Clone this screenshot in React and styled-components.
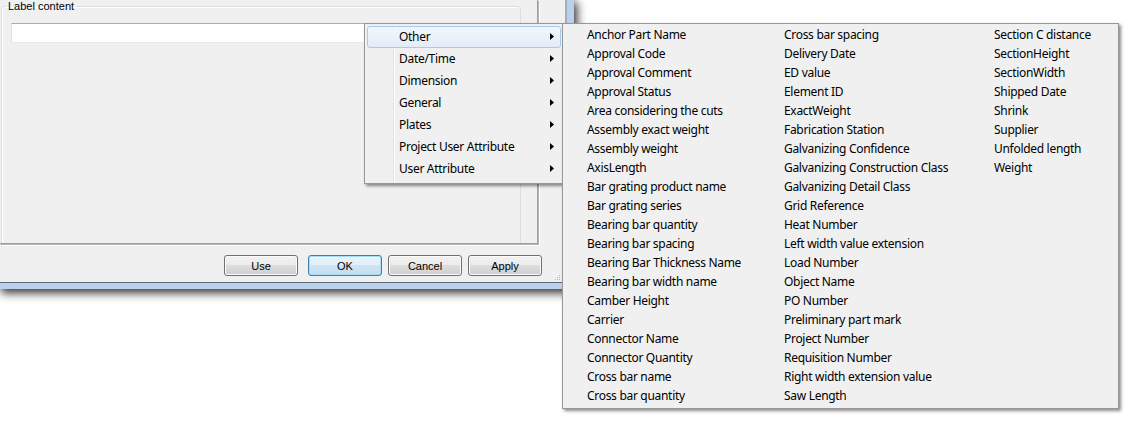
import React from 'react';
import styled, { createGlobalStyle } from 'styled-components';

const GlobalStyle = createGlobalStyle`
  html, body {
    margin: 0;
    padding: 0;
    background: #ffffff;
  }
`;

const Screen = styled.div`
  position: relative;
  width: 1129px;
  height: 434px;
  overflow: hidden;
  background: #ffffff;
`;

const Dialog = styled.div`
  box-sizing: border-box;
  width: 574px;
  height: 289px;
  border-right: 7px solid #b9d1ea;
  border-bottom: 6px solid #b9d1ea;
  box-shadow: 2px 3px 9px 1px rgba(0, 0, 0, 0.8);
  background: #b9d1ea;
`;

const Client = styled.div`
  position: relative;
  box-sizing: border-box;
  width: 567px;
  height: 283px;
  display: flex;
  flex-direction: column;
  background: #f0f0f0;
  border-right: 2px solid #a3afbc;
  border-bottom: 1px solid #5d6b7a;
`;

const Panel = styled.div`
  box-sizing: border-box;
  width: 538px;
  height: 244px;
  overflow: hidden;
  border-right: 1px solid #a0a0a0;
  border-bottom: 1px solid #a0a0a0;
  box-shadow: 1px 1px 0 #b4b4b4, 2px 2px 0 #ffffff;
  background: #f0f0f0;
`;

const GroupBox = styled.fieldset`
  box-sizing: border-box;
  margin: 0 0 0 1px;
  padding: 0;
  width: 520px;
  height: 260px;
  border: 1px solid #d5dfe5;
  border-radius: 3px;
  box-shadow: inset 1px 1px 0 #ffffff;
`;

const Legend = styled.legend`
  margin-left: 4px;
  padding: 0 2px;
  font-family: "Liberation Sans", Arial, sans-serif;
  font-size: 11px;
  line-height: 13px;
  color: #000;
`;

const TextField = styled.input`
  box-sizing: border-box;
  display: block;
  margin: 10px 0 0 9px;
  width: 354px;
  height: 20px;
  border: 1px solid;
  border-color: #abadb3 #e2e3ea #e3e9ef #dbdfe6;
  background: #ffffff;
  outline: none;
`;

const ButtonRow = styled.div`
  display: flex;
  justify-content: flex-end;
  gap: 6px;
  padding: 11px 23px 0 0;
`;

const Button = styled.button`
  box-sizing: border-box;
  width: 74px;
  height: 21px;
  margin-right: ${(p) => p.$extra || 0}px;
  padding: 0;
  font-family: "Liberation Sans", Arial, sans-serif;
  font-size: 11px;
  color: #000;
  border-radius: 3px;
  border: 1px solid ${(p) => (p.$default ? '#3c7fb1' : '#707070')};
  background: ${(p) =>
    p.$default
      ? 'linear-gradient(#eaf4fb 0%, #e1eef8 50%, #cfe4f3 50%, #c2dcee 100%)'
      : 'linear-gradient(#f2f2f2 0%, #ebebeb 50%, #dddddd 50%, #cfcfcf 100%)'};
  box-shadow: inset 0 0 0 1px ${(p) => (p.$default ? '#a9dcf6' : '#fcfcfc')};
`;

const Grip = styled.svg`
  position: absolute;
  right: 4px;
  bottom: 1px;
`;

const Menu = styled.div`
  position: absolute;
  left: 364px;
  top: 23px;
  box-sizing: border-box;
  width: 200px;
  height: 161px;
  padding: 2px;
  border: 1px solid #979797;
  background: linear-gradient(
    to right,
    #f0f0f0 28px,
    #e2e3e3 28px,
    #e2e3e3 29px,
    #ffffff 29px,
    #ffffff 30px,
    #f0f0f0 30px
  );
  box-shadow: 2px 2px 3px rgba(0, 0, 0, 0.45);
  font-family: "Noto Sans", "Open Sans", sans-serif;
  font-size: 12px;
  letter-spacing: -0.3px;
  color: #000;
`;

const MenuItem = styled.div`
  box-sizing: border-box;
  height: 22px;
  display: flex;
  align-items: center;
  justify-content: space-between;
  padding: 0 6px 1px 31px;
  border: 1px solid ${(p) => (p.$active ? '#a8caf0' : 'transparent')};
  border-radius: 3px;
  background: ${(p) =>
    p.$active ? 'linear-gradient(#f1f6fc, #e3ecf8)' : 'transparent'};
`;

const SubMenu = styled.div`
  position: absolute;
  left: 562px;
  top: 23px;
  box-sizing: border-box;
  width: 557px;
  height: 386px;
  padding: 1px 0 0 0;
  border: 1px solid #979797;
  background: #f0f0f0;
  box-shadow: 2px 2px 3px rgba(0, 0, 0, 0.45);
  display: grid;
  grid-template-columns: 197px 210px 1fr;
  grid-template-rows: repeat(20, 19px);
  grid-auto-flow: column;
  align-content: start;
  font-family: "Noto Sans", "Open Sans", sans-serif;
  font-size: 12px;
  letter-spacing: -0.3px;
  color: #000;
`;

const SubItem = styled.div`
  display: flex;
  align-items: center;
  padding-left: 24px;
  white-space: nowrap;
`;

const Arrow = () => (
  <svg width="4" height="7" viewBox="0 0 4 7">
    <polygon points="0,0 4,3.5 0,7" fill="#000" />
  </svg>
);

const categories = [
  'Other',
  'Date/Time',
  'Dimension',
  'General',
  'Plates',
  'Project User Attribute',
  'User Attribute',
];

const attributes = [
  'Anchor Part Name',
  'Approval Code',
  'Approval Comment',
  'Approval Status',
  'Area considering the cuts',
  'Assembly exact weight',
  'Assembly weight',
  'AxisLength',
  'Bar grating product name',
  'Bar grating series',
  'Bearing bar quantity',
  'Bearing bar spacing',
  'Bearing Bar Thickness Name',
  'Bearing bar width name',
  'Camber Height',
  'Carrier',
  'Connector Name',
  'Connector Quantity',
  'Cross bar name',
  'Cross bar quantity',
  'Cross bar spacing',
  'Delivery Date',
  'ED value',
  'Element ID',
  'ExactWeight',
  'Fabrication Station',
  'Galvanizing Confidence',
  'Galvanizing Construction Class',
  'Galvanizing Detail Class',
  'Grid Reference',
  'Heat Number',
  'Left width value extension',
  'Load Number',
  'Object Name',
  'PO Number',
  'Preliminary part mark',
  'Project Number',
  'Requisition Number',
  'Right width extension value',
  'Saw Length',
  'Section C distance',
  'SectionHeight',
  'SectionWidth',
  'Shipped Date',
  'Shrink',
  'Supplier',
  'Unfolded length',
  'Weight',
];

const App = () => {
  return (
    <Screen>
      <GlobalStyle />
      <Dialog>
        <Client>
          <Panel>
            <GroupBox>
              <Legend>Label content</Legend>
              <TextField type="text" />
            </GroupBox>
          </Panel>
          <ButtonRow>
            <Button $extra={4}>Use</Button>
            <Button $default>OK</Button>
            <Button>Cancel</Button>
            <Button>Apply</Button>
          </ButtonRow>
          <Grip width="6" height="6" viewBox="0 0 6 6">
            <rect x="4" y="0" width="1" height="1" fill="#b8b8b8" />
            <rect x="2" y="2" width="1" height="1" fill="#b8b8b8" />
            <rect x="4" y="2" width="1" height="1" fill="#b8b8b8" />
            <rect x="0" y="4" width="1" height="1" fill="#b8b8b8" />
            <rect x="2" y="4" width="1" height="1" fill="#b8b8b8" />
            <rect x="4" y="4" width="1" height="1" fill="#b8b8b8" />
          </Grip>
        </Client>
      </Dialog>

      <Menu>
        {categories.map((c, i) => (
          <MenuItem key={c} $active={i === 0}>
            <span>{c}</span>
            <Arrow />
          </MenuItem>
        ))}
      </Menu>

      <SubMenu>
        {attributes.map((a) => (
          <SubItem key={a}>{a}</SubItem>
        ))}
      </SubMenu>
    </Screen>
  );
};

export default App;
